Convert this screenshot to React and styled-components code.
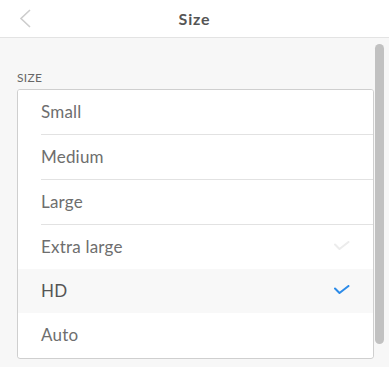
import React from 'react';
import styled, { createGlobalStyle } from 'styled-components';

const GlobalStyle = createGlobalStyle`
  *, *::before, *::after {
    box-sizing: border-box;
  }
  html, body {
    margin: 0;
    padding: 0;
    background: #f7f7f7;
    font-family: Lato, "Open Sans", sans-serif;
  }
`;

const Screen = styled.div`
  width: 389px;
  height: 367px;
  display: flex;
  flex-direction: column;
  background: #f7f7f7;
  overflow: hidden;
`;

const Header = styled.header`
  height: 38px;
  flex: none;
  display: grid;
  grid-template-columns: 60px 1fr 60px;
  align-items: center;
  background: #fff;
  border-bottom: 1px solid #e3e3e3;
`;

const BackButton = styled.button`
  border: 0;
  background: none;
  padding: 0 0 0 19px;
  height: 37px;
  display: flex;
  align-items: center;
  cursor: pointer;
`;

const Title = styled.h1`
  margin: 0;
  text-align: center;
  font-size: 16px;
  font-weight: 700;
  letter-spacing: 0.8px;
  color: #555;
`;

const Body = styled.main`
  position: relative;
  flex: 1;
  overflow: hidden;
  padding: 0 15px 20px 17px;
`;

const ScrollThumb = styled.div`
  position: absolute;
  top: 6px;
  right: 5px;
  width: 9px;
  height: 300px;
  border-radius: 5px;
  background: #c1c1c1;
`;

const SectionLabel = styled.div`
  margin-top: 32px;
  margin-bottom: 3px;
  font-size: 12px;
  line-height: 16px;
  letter-spacing: 0.3px;
  color: #666;
  text-transform: uppercase;
`;

const Card = styled.ul`
  list-style: none;
  margin: 0;
  padding: 0 0 1px;
  background: #fff;
  border: 1px solid #cfcfcf;
  border-radius: 3px;
  overflow: hidden;
`;

const Row = styled.li`
  padding-left: 23px;
  background: ${p => (p.$selected ? '#f8f8f8' : '#fff')};
  cursor: pointer;

  & + & > div {
    height: 45px;
    border-top: 1px solid #e2e2e2;
  }
`;

const RowInner = styled.div`
  height: 44px;
  display: flex;
  align-items: center;
  justify-content: space-between;
  padding: 0 23px 2px 0;
`;

const Label = styled.span`
  font-size: 17px;
  letter-spacing: 0.2px;
  color: ${p => (p.$selected ? '#555' : '#6e6e6e')};
`;

const Check = ({ color }) => (
  <svg width="16" height="10" viewBox="0 0 16 10">
    <polyline
      points="1,3.5 5.5,8 14.5,1"
      fill="none"
      stroke={color}
      strokeWidth="2"
      strokeLinecap="round"
      strokeLinejoin="round"
    />
  </svg>
);

const sizes = [
  { name: 'Small' },
  { name: 'Medium' },
  { name: 'Large' },
  { name: 'Extra large', hover: true },
  { name: 'HD', selected: true },
  { name: 'Auto' },
];

export default function App() {
  return (
    <>
      <GlobalStyle />
      <Screen>
        <Header>
          <BackButton aria-label="Back">
            <svg width="12" height="20" viewBox="0 0 12 20">
              <polyline points="11,1 2,9.5 11,18" fill="none" stroke="#cdcdcd" strokeWidth="1.6" />
            </svg>
          </BackButton>
          <Title>Size</Title>
          <span />
        </Header>
        <Body>
          <SectionLabel>Size</SectionLabel>
          <Card>
            {sizes.map(s => (
              <Row key={s.name} $selected={s.selected}>
                <RowInner>
                  <Label $selected={s.selected}>{s.name}</Label>
                  {s.selected && <Check color="#2c8be8" />}
                  {s.hover && <Check color="#ececec" />}
                </RowInner>
              </Row>
            ))}
          </Card>
          <ScrollThumb />
        </Body>
      </Screen>
    </>
  );
}
